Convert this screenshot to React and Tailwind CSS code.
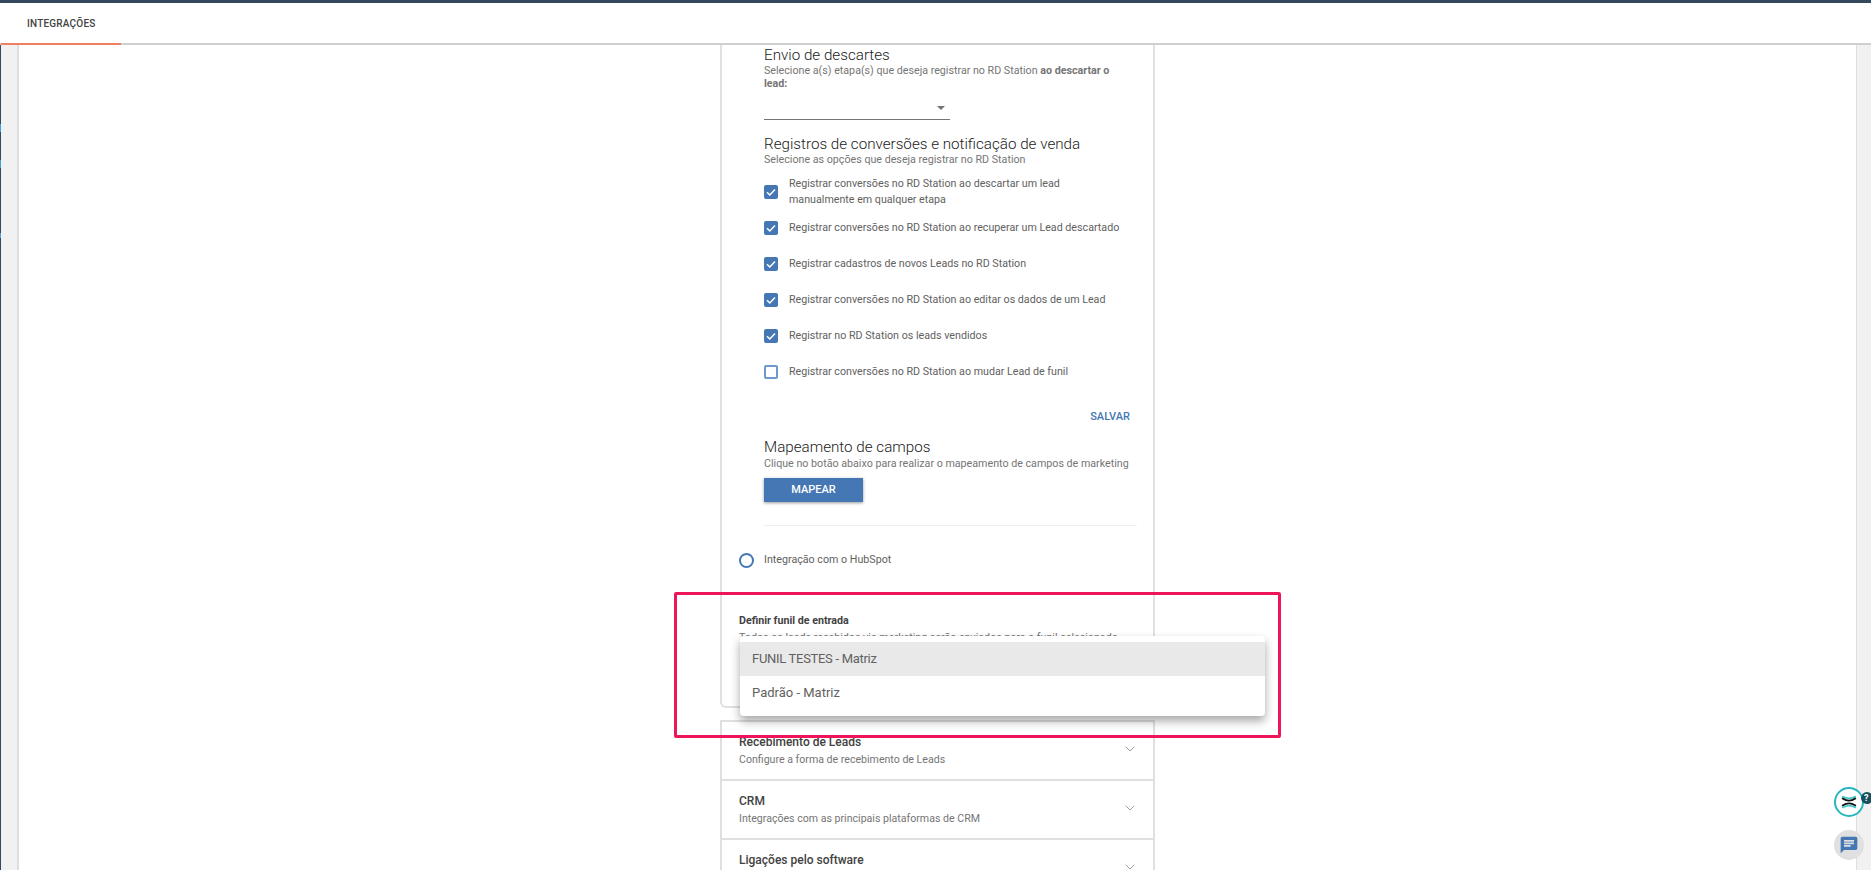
import React from "react";
import { ChevronDown } from "lucide-react";

const checks = [
  { label: <>Registrar conversões no RD Station ao descartar um lead<br />manualmente em qualquer etapa</>, on: true },
  { label: "Registrar conversões no RD Station ao recuperar um Lead descartado", on: true },
  { label: "Registrar cadastros de novos Leads no RD Station", on: true },
  { label: "Registrar conversões no RD Station ao editar os dados de um Lead", on: true },
  { label: "Registrar no RD Station os leads vendidos", on: true },
  { label: "Registrar conversões no RD Station ao mudar Lead de funil", on: false },
];

function Check({ on }) {
  if (!on) return <span className="block w-[14px] h-[14px] shrink-0 rounded-[2px] border-2 border-[#6f97c9] bg-white" />;
  return (
    <span className="flex items-center justify-center w-[14px] h-[14px] shrink-0 rounded-[2px] bg-[#4577b5]">
      <svg viewBox="0 0 14 14" className="w-[14px] h-[14px]" fill="none" stroke="#fff" strokeWidth="1.5">
        <path d="M3 7.2 L5.8 10 L11 4.4" />
      </svg>
    </span>
  );
}

function Panel({ title, sub }) {
  return (
    <div className="h-[59px] shrink-0 flex items-start justify-between border-x-2 border-b-[2px] border-[#e0e0e0] pl-[17px] pr-[15px] pt-[12px]">
      <div>
        <div className="text-[12px] leading-[16px] font-medium text-[#424242]">{title}</div>
        <div className="text-[10.6px] leading-[16px] mt-[2px] text-[#757575]">{sub}</div>
      </div>
      <ChevronDown className="w-[16px] h-[16px] mt-[7px] text-[#9e9e9e]" strokeWidth={1.5} />
    </div>
  );
}

export default function App() {
  return (
    <div className="relative h-[870px] w-full overflow-hidden bg-white flex flex-col font-['Roboto',sans-serif]">
      <div className="h-[3px] bg-[#34495e] shrink-0" />
      <div className="h-[42px] shrink-0 flex bg-white border-b-2 border-[#cfcfcf] pl-px">
        <div className="w-[120px] h-[42px] border-b-2 border-[#ee7f5f] flex items-center pl-[26px] pt-[1px] text-[10px] font-medium tracking-[0.2px] text-[#424242]">
          INTEGRAÇÕES
        </div>
      </div>
      <div className="flex-1 flex min-h-0">
        <div className="w-[1px] bg-[#34495e] shrink-0 flex flex-col">
          <div className="h-[79px]" />
          <div className="h-[8px] bg-[#3ca0d8]" />
          <div className="h-[28px]" />
          <div className="h-[8px] bg-[#3ca0d8]" />
          <div className="h-[65px]" />
          <div className="h-[5px] bg-[#5a9ad8]" />
        </div>
        <div className="w-[18px] bg-[#f1f1f1] border-r-2 border-[#dedede] shrink-0" />
        <div className="flex-1 min-w-0 pl-[701px]">
          <div className="w-[435px] flex flex-col">
            <div className="h-[663px] shrink-0 border-x-2 border-b-2 border-[#e0e0e0] rounded-bl-[6px] rounded-br-[6px]">
              <div className="pl-[42px] pr-[16px]">
                <h2 className="text-[15.2px] leading-[20px] font-light text-[#212121]">Envio de descartes</h2>
                <p className="text-[10.7px] leading-[13px] text-[#757575] mt-[-1px]">
                  Selecione a(s) etapa(s) que deseja registrar no RD Station <b className="font-bold">ao descartar o<br />lead:</b>
                </p>
                <div className="w-[186px] h-[30px] border-b border-[#757575] flex items-center justify-end pr-[5px]">
                  <span className="w-0 h-0 border-x-[4px] border-t-[4px] border-x-transparent border-t-[#757575] mt-[6px]" />
                </div>
                <h2 className="text-[15.2px] leading-[20px] font-light text-[#212121] mt-[14px]">Registros de conversões e notificação de venda</h2>
                <p className="text-[10.7px] leading-[13px] text-[#757575] mt-[-1px]">Selecione as opções que deseja registrar no RD Station</p>

                <div className="mt-[10px] flex flex-col text-[10.7px] leading-[16px] text-[#616161]">
                  <div className="flex items-center gap-[11px] h-[32px] mb-[4px]">
                    <Check on={checks[0].on} />
                    <span>{checks[0].label}</span>
                  </div>
                  {checks.slice(1).map((c, i) => (
                    <div key={i} className="flex items-center gap-[11px] h-[36px] pb-[4px]">
                      <Check on={c.on} />
                      <span>{c.label}</span>
                    </div>
                  ))}
                </div>

                <div className="flex justify-end mt-[17px] pr-[7px] text-[11px] leading-[16px] font-medium text-[#4577b5]">SALVAR</div>
                <h2 className="text-[15.2px] leading-[20px] font-light text-[#212121] mt-[12px]">Mapeamento de campos</h2>
                <p className="text-[10.7px] leading-[14px] text-[#757575]">Clique no botão abaixo para realizar o mapeamento de campos de marketing</p>
                <button className="block w-[99px] h-[24px] mt-[7px] bg-[#4577b5] text-white text-[11px] font-medium shadow-[0_1px_3px_rgba(0,0,0,0.4)]">MAPEAR</button>
                <div className="h-px bg-[#eeeeee] mt-[23px]" />
              </div>
              <div className="flex items-center gap-[10px] pl-[17px] mt-[26px] text-[10.7px] leading-[16px] text-[#616161]">
                <span className="block w-[15px] h-[15px] rounded-full border-2 border-[#4577b5]" />
                Integração com o HubSpot
              </div>
              <div className="pl-[17px] mt-[45px]">
                <div className="text-[10.7px] leading-[16px] font-bold text-[#424242]">Definir funil de entrada</div>
                <div className="text-[10.7px] leading-[14px] mt-[2px] text-[#757575]">Todos os leads recebidos via marketing serão enviados para o funil selecionado</div>
              </div>
            </div>
            <div className="h-[12px] shrink-0" />
            <div className="border-t-2 border-[#e0e0e0]">
              <Panel title="Recebimento de Leads" sub="Configure a forma de recebimento de Leads" />
              <Panel title="CRM" sub="Integrações com as principais plataformas de CRM" />
              <Panel title="Ligações pelo software" sub="" />
            </div>
          </div>
        </div>
        <div className="w-[15px] bg-[#f1f1f1] border-l border-[#dedede] shrink-0" />
      </div>

      {/* Dropdown menu */}
      <div className="absolute left-[740px] top-[636px] w-[525px] h-[80px] py-[6px] bg-white rounded-[4px] shadow-[0_5px_10px_rgba(0,0,0,0.35)] text-[13px] text-[#616161]">
        <div className="h-[34px] flex items-center pl-[12px] bg-[#e9e9e9] tracking-[-0.3px]">FUNIL TESTES - Matriz</div>
        <div className="h-[34px] flex items-center pl-[12px]">Padrão - Matriz</div>
      </div>

      {/* Annotation */}
      <div className="absolute left-[674px] top-[592px] w-[607px] h-[146px] border-[3px] border-[#ee1558] rounded-[2px] pointer-events-none" />

      {/* Widgets */}
      <div className="absolute left-[1834px] top-[787px] w-[30px] h-[30px] rounded-full bg-white border-2 border-[#27b7bd] flex items-center justify-center">
        <svg viewBox="0 0 20 20" className="w-[18px] h-[18px]" fill="none" strokeLinecap="round">
          <path d="M3 4 Q10 8 17 4" stroke="#4cc9cd" strokeWidth="2" />
          <path d="M3 6 Q10 11 17 6" stroke="#111" strokeWidth="2" />
          <path d="M3 14 Q10 9 17 14" stroke="#111" strokeWidth="2" />
          <path d="M3 16 Q10 12 17 16" stroke="#4cc9cd" strokeWidth="2" />
        </svg>
      </div>
      <div className="absolute left-[1861px] top-[792px] w-[12px] h-[12px] rounded-full bg-[#15505f] text-white text-[9px] leading-[12px] font-bold pl-[3px]">?</div>
      <div className="absolute left-[1834px] top-[830px] w-[30px] h-[30px] rounded-full bg-[#e0e0e0] flex items-center justify-center">
        <svg viewBox="0 0 24 24" className="w-[20px] h-[20px]" fill="#4577b5">
          <path d="M20 2H4a2 2 0 0 0-2 2v18l4-4h14a2 2 0 0 0 2-2V4a2 2 0 0 0-2-2zM6 9h12v2H6V9zm8 5H6v-2h8v2zm4-6H6V6h12v2z" />
        </svg>
      </div>
    </div>
  );
}
